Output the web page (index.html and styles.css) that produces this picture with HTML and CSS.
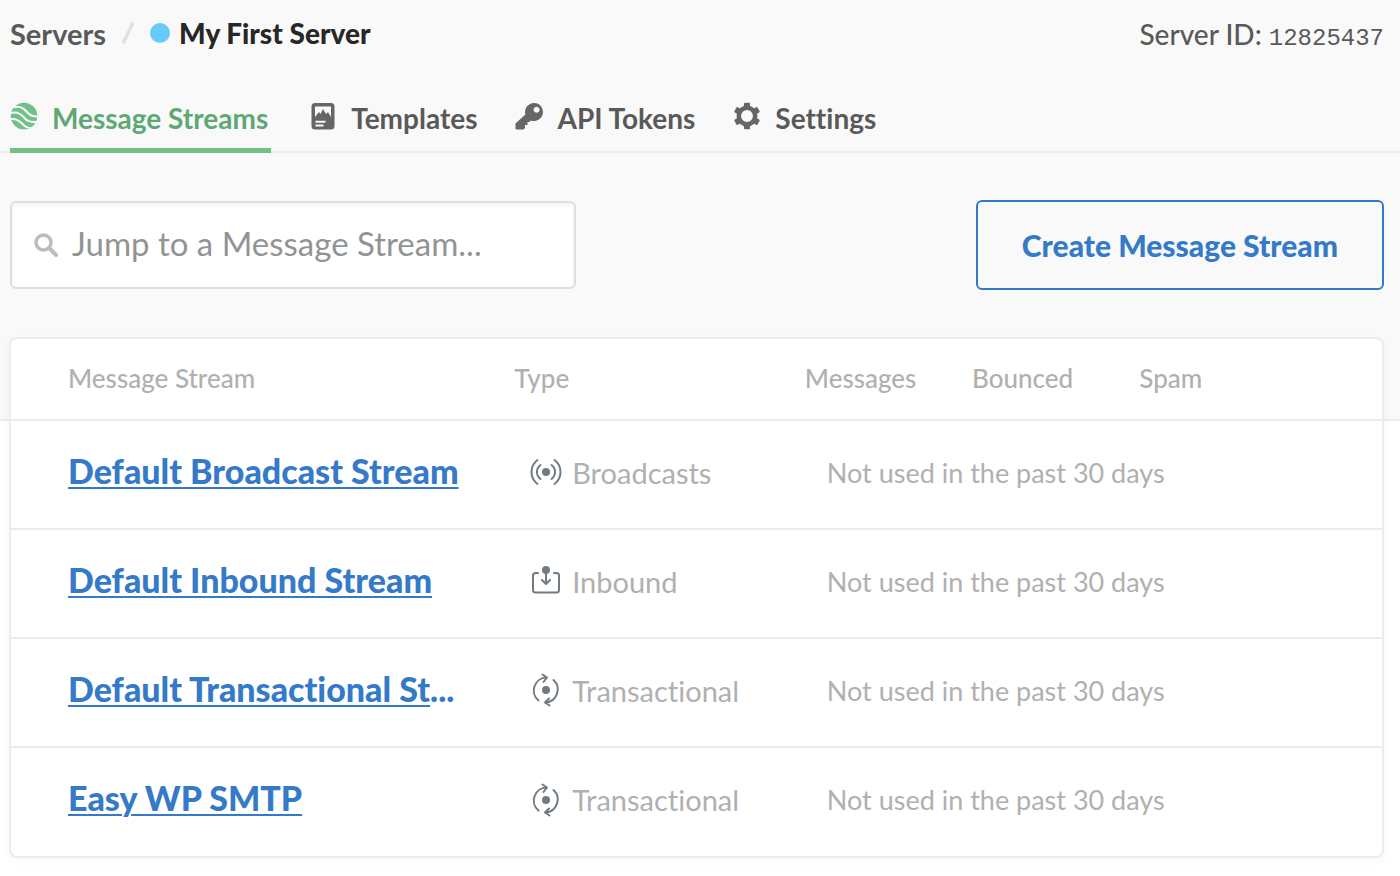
FILE: index.html
```html
<!DOCTYPE html>
<html lang="en">
<head>
<meta charset="utf-8">
<title>My First Server</title>
<link rel="stylesheet" href="styles.css">
</head>
<body>
<svg class="sprite" aria-hidden="true">
  <symbol id="transactional" viewBox="0 0 32 34">
    <g fill="none" stroke="#737a82" stroke-width="2" stroke-linecap="round" stroke-linejoin="round">
      <path d="M8.500 27.500A13 13 0 0 1 16.500 4.500M12.500 1.500l4.500 3-3.500 4.500M23.500 7A13 13 0 0 1 15.500 29.500M19 25.500l-4 4 4.500 3"/>
    </g>
    <circle cx="16" cy="17" r="4" fill="#737a82"/>
  </symbol>
</svg>
<div class="upper">
  <header class="top">
    <nav class="crumbs" aria-label="Breadcrumb">
      <a class="crumb" href="#">Servers</a>
      <svg class="slash" viewBox="0 0 14 24" aria-hidden="true"><path d="M2 22.500L12 1.500" stroke="#dfe1e1" stroke-width="3.500"/></svg>
      <span class="dot"></span>
      <h1 class="current">My First Server</h1>
    </nav>
    <p class="server-id">Server ID: <span class="digits">12825437</span></p>
  </header>
  <nav class="tabs" aria-label="Server">
    <a class="tab active" href="#">
      <svg class="tab-icon" viewBox="0 0 28 28" aria-hidden="true">
        <circle cx="14" cy="14" r="13.300" fill="#71c088"/>
        <g fill="none" stroke="#f9f9f9" stroke-width="2">
          <path d="M2 5.500C9 3.500 13 5.500 16.500 9.500S22 14.500 28.500 14.500"/>
          <path d="M-1 11.500C6 9 10 11 13.500 15S19 20.500 28 20"/>
          <path d="M-1 17.500C5 15.500 8.500 18 12 21.500S17 26 23 26"/>
        </g>
      </svg>
      <span>Message Streams</span>
    </a>
    <a class="tab" href="#">
      <svg class="tab-icon" viewBox="0 0 28 28" aria-hidden="true">
        <rect x="2.500" y="1" width="23" height="26.500" rx="3.500" fill="#666"/>
        <path d="M6 4.500h16v10.500l-3-5-2 2-3-5-2.500 5-1.500-2L6 15z" fill="#f9f9f9"/>
        <path d="M6.500 19.700h10M6.500 23.500h8" stroke="#f9f9f9" stroke-width="2"/>
      </svg>
      <span>Templates</span>
    </a>
    <a class="tab" href="#">
      <svg class="tab-icon" viewBox="0 0 28 28" aria-hidden="true">
        <path fill="#666" fill-rule="evenodd" d="M19 1a9 9 0 1 1-3.300 17.400L14.500 20H12.500v3H10v3L8.500 27.500H1.500Q.5 27.500.5 26.500V21.500L10.400 12.500A9 9 0 0 1 19 1zM21.500 4.700a3 3 0 1 0 .1 0z"/>
      </svg>
      <span>API Tokens</span>
    </a>
    <a class="tab" href="#">
      <svg class="tab-icon" viewBox="0 0 28 28" aria-hidden="true">
        <g fill="#666">
          <g id="teeth"><rect x="11" y=".7" width="6" height="6" rx="1"/><rect x="11" y="21.300" width="6" height="6" rx="1"/></g>
          <use href="#teeth" transform="rotate(60 14 14)"/>
          <use href="#teeth" transform="rotate(120 14 14)"/>
        </g>
        <circle cx="14" cy="14" r="8.200" fill="none" stroke="#666" stroke-width="4.500"/>
      </svg>
      <span>Settings</span>
    </a>
  </nav>
  <div class="toolbar">
    <label class="search">
      <svg class="search-icon" viewBox="0 0 24 24" aria-hidden="true"><circle cx="9.500" cy="9.500" r="7.500" fill="none" stroke="#bdbdbd" stroke-width="3.500"/><path d="M15 15l7 7" stroke="#bdbdbd" stroke-width="4" stroke-linecap="round"/></svg>
      <input class="search-input" type="text" placeholder="Jump to a Message Stream..." aria-label="Jump to a Message Stream">
    </label>
    <button class="create" type="button">Create Message Stream</button>
  </div>
</div>
<main class="card">
  <table class="streams">
    <colgroup><col class="col-name"><col class="col-type"><col class="col-count"><col class="col-count"><col></colgroup>
    <thead>
      <tr><th scope="col">Message Stream</th><th scope="col">Type</th><th scope="col">Messages</th><th scope="col">Bounced</th><th scope="col">Spam</th></tr>
    </thead>
    <tbody>
      <tr>
        <td><div class="name"><a href="#">Default Broadcast Stream</a></div></td>
        <td><div class="type">
          <svg class="type-icon" viewBox="0 0 32 34" aria-hidden="true">
            <g fill="none" stroke="#737a82" stroke-width="2" stroke-linecap="round"><path d="M7.500 5Q1.500 9.500 1.500 17T7.500 29M24.500 5Q30.500 9.500 30.500 17T24.500 29M10.500 10Q7 12.500 7 17T10.500 24M21.500 10Q25 12.500 25 17T21.500 24"/></g>
            <circle cx="16" cy="17" r="4" fill="#737a82"/>
          </svg>Broadcasts</div></td>
        <td class="usage" colspan="3">Not used in the past 30 days</td>
      </tr>
      <tr>
        <td><div class="name"><a href="#">Default Inbound Stream</a></div></td>
        <td><div class="type">
          <svg class="type-icon" viewBox="0 0 32 34" aria-hidden="true">
            <g fill="none" stroke="#737a82" stroke-width="2" stroke-linecap="round" stroke-linejoin="round"><path d="M8 9H5.500Q3 9 3 11.500V26Q3 28.500 5.500 28.500H26.500Q29 28.500 29 26V11.500Q29 9 26.500 9H24M16 8V19M12 16L16 20 20 16"/></g>
            <circle cx="16" cy="6" r="4" fill="#737a82"/>
          </svg>Inbound</div></td>
        <td class="usage" colspan="3">Not used in the past 30 days</td>
      </tr>
      <tr>
        <td><div class="name"><a href="#" title="Default Transactional Stream">Default Transactional St</a>...</div></td>
        <td><div class="type"><svg class="type-icon" aria-hidden="true"><use href="#transactional"/></svg>Transactional</div></td>
        <td class="usage" colspan="3">Not used in the past 30 days</td>
      </tr>
      <tr>
        <td><div class="name"><a href="#">Easy WP SMTP</a></div></td>
        <td><div class="type"><svg class="type-icon" aria-hidden="true"><use href="#transactional"/></svg>Transactional</div></td>
        <td class="usage" colspan="3">Not used in the past 30 days</td>
      </tr>
    </tbody>
  </table>
</main>
</body>
</html>
```

FILE: styles.css
```css
* { box-sizing: border-box; }
body { margin: 0; background: #fff; color: #595959; font-family: Lato, "Liberation Sans", sans-serif; font-size: 28px; font-variant-ligatures: none; }
a { color: inherit; text-decoration: none; }
svg { flex: none; }
.sprite { display: none; }

.upper { background: #f9f9f9; border-bottom: 2px solid #ececec; padding-bottom: 129px; }
.top { display: flex; align-items: center; justify-content: space-between; height: 66px; padding: 0 16px 0 10px; }
.crumbs { display: flex; align-items: center; font-weight: 700; }
.crumb { font-size: 29px; }
.slash { width: 14px; height: 24px; margin: 0 15px; }
.dot { width: 20px; height: 20px; margin-right: 9px; border-radius: 50%; background: #65cbfb; }
.current { margin: 0; color: #272727; font-size: 28px; font-weight: 900; }
.server-id { margin: 0; padding-top: 2px; font-weight: 500; }
.digits { font-family: "Liberation Mono", monospace; font-size: 24px; }

.tabs { display: flex; gap: 38px; padding: 0 10px; border-bottom: 2px solid #ececec; }
.tab { display: flex; align-items: center; gap: 14px; height: 87px; margin-bottom: -2px; padding-top: 22px; border-bottom: 5px solid transparent; font-weight: 700; }
.tab.active { padding-right: 3px; color: #5da873; border-bottom-color: #71c088; }
.tab-icon { width: 28px; height: 28px; margin-bottom: 4px; }

.toolbar { display: flex; align-items: center; justify-content: space-between; padding: 47px 16px 0 10px; }
.search { display: flex; align-items: center; gap: 14px; width: 566px; height: 88px; padding: 0 22px; background: #fff; border: 2px solid #dedede; border-radius: 6px; box-shadow: inset 0 2px 4px #0000000d; }
.search-icon { width: 24px; height: 24px; }
.search-input { flex: 1; min-width: 0; padding: 0 0 4px; border: 0; outline: 0; background: none; font: inherit; font-size: 33px; color: #595959; }
.search-input::placeholder { color: #929494; opacity: 1; }
.create { height: 90px; padding: 0 44px; background: none; border: 2px solid #357ac8; border-radius: 6px; color: #357ac8; font: inherit; font-size: 30px; font-weight: 900; }

.card { position: relative; margin: -84px 16px 18px 9px; background: #fff; border: 2px solid #ececec; border-radius: 8px; box-shadow: 0 4px 12px #00000008; }
.streams { width: 100%; border-collapse: collapse; table-layout: fixed; }
.col-name { width: 36.7%; }
.col-type { width: 21.2%; }
.col-count { width: 12.2%; }
th { height: 81px; padding: 0 0 2px; border-bottom: 2px solid #ececec; color: #b0b0b0; font-size: 26px; font-weight: 500; text-align: left; }
td { height: 109px; padding: 0 0 5px; }
tbody tr + tr td { border-top: 2px solid #ececec; }
th:first-child, td:first-child { padding-left: 57px; }
.name { padding-bottom: 4px; color: #357ac8; font-size: 34px; font-weight: 900; white-space: nowrap; }
.name a { text-decoration: underline; text-decoration-thickness: 2px; text-underline-offset: 3px; }
.type { display: flex; align-items: center; gap: 10px; padding-left: 16px; color: #b0b0b0; font-size: 29px; }
.type-icon { width: 32px; height: 34px; }
.usage { padding-left: 22px; color: #b0b0b0; font-size: 27px; }
```
